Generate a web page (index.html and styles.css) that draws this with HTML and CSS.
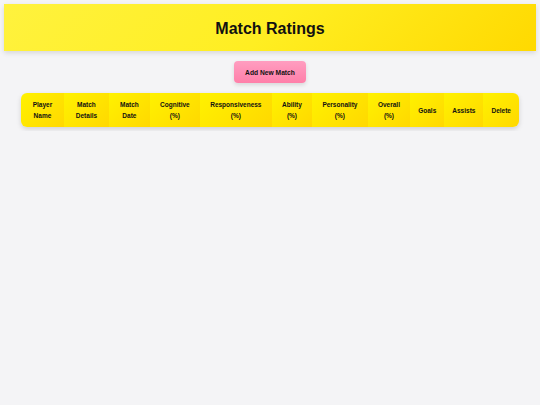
FILE: index.html
```html
<!DOCTYPE html>
<html>
<head>
<meta charset="utf-8">
<link rel="stylesheet" href="styles.css">
</head>
<body>
<header class="banner"><h1 class="title">Match Ratings</h1></header>
<div class="actions"><button class="add-btn">Add New Match</button></div>
<div class="table-wrap">
<table class="ratings">
<thead>
<tr>
<th>Player Name</th>
<th>Match Details</th>
<th>Match Date</th>
<th>Cognitive (%)</th>
<th>Responsiveness (%)</th>
<th>Ability (%)</th>
<th>Personality (%)</th>
<th>Overall (%)</th>
<th>Goals</th>
<th>Assists</th>
<th>Delete</th>
</tr>
</thead>
<tbody></tbody>
</table>
</div>
</body>
</html>
```
FILE: styles.css
```css
html, body { margin: 0; padding: 0; }
body {
  background: #f4f4f6;
  font-family: "Liberation Sans", Arial, sans-serif;
  color: #111;
  padding: 4px;
}
.banner {
  height: 47px;
  background: linear-gradient(135deg, #fff23e 0%, #ffee22 50%, #ffd900 100%);
  box-shadow: 0 2px 5px rgba(0,0,0,0.12);
  display: flex;
  align-items: center;
  justify-content: center;
}
.title {
  margin: 0;
  padding-top: 2px;
  font-size: 16px;
  font-weight: bold;
  color: #111;
}
.actions {
  display: flex;
  justify-content: center;
  margin-top: 10px;
}
.add-btn {
  width: 72px;
  height: 22px;
  border: none;
  border-radius: 4px;
  background: linear-gradient(180deg, #ff9dc0, #ff7fa9);
  box-shadow: 0 2px 4px rgba(0,0,0,0.12);
  font-family: "Liberation Sans", Arial, sans-serif;
  font-weight: bold;
  font-size: 6.7px;
  color: #111;
  padding: 0;
}
.table-wrap {
  display: flex;
  justify-content: center;
  margin-top: 10px;
}
.ratings {
  width: 498px;
  border-collapse: separate;
  border-spacing: 0;
  border-radius: 6px;
  overflow: hidden;
  box-shadow: 0 2px 5px rgba(0,0,0,0.15);
}
.ratings th {
  background: linear-gradient(135deg, #fff200, #ffd800);
  font-size: 6.5px;
  font-weight: bold;
  line-height: 11px;
  padding: 6px 8px;
  height: 22px;
  text-align: center;
  color: #111;
}
```
